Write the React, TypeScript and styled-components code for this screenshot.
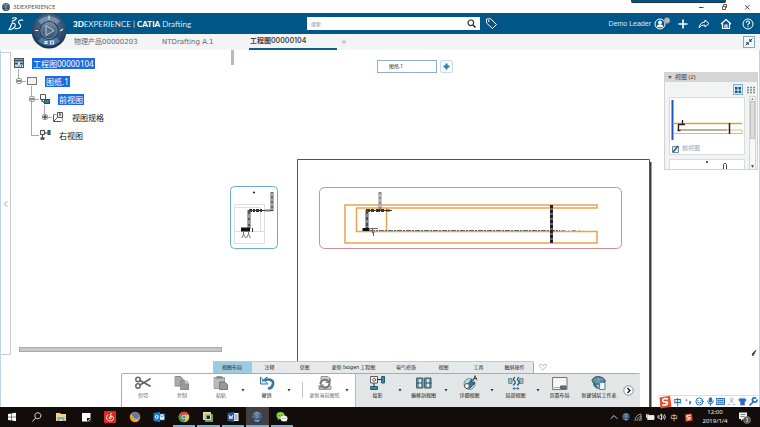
import React from "react";
import styled, { createGlobalStyle } from "styled-components";

const GlobalStyle = createGlobalStyle`
  * { box-sizing: border-box; }
  body { margin: 0; background: #fff; }
  body, button, input {
    font-family: "Noto Sans", "Noto Sans CJK SC", sans-serif;
    color: #333;
  }
  button { padding: 0; border: 0; background: none; cursor: pointer; }
  svg { display: block; flex: none; }
`;

const Window = styled.div`
  position: relative;
  display: grid;
  grid-template-rows: 13px 21px 16px 1fr 20px;
  min-height: 100vh;
  overflow: hidden;
`;

/* ---------- title bar ---------- */
const TitleBar = styled.header`
  display: flex;
  align-items: center;
  padding: 0 9px 0 2px;
  font-size: 6px;
  color: #555;
`;
const TitleText = styled.span`
  margin-left: 3px;
  flex: 1;
`;
const WindowControls = styled.div`
  display: flex;
  gap: 15px;
`;
const IconButton = styled.button`
  display: grid;
  place-items: center;
`;
const DockedStrip = styled.div`
  position: absolute;
  top: 0;
  right: 34px;
  width: 95px;
  height: 3px;
  background: #0c5277;
  border-bottom: 1px solid #083a57;
  border-radius: 0 0 2px 2px;
`;

/* ---------- application header ---------- */
const AppBar = styled.div`
  display: flex;
  align-items: center;
  padding: 0 6px 0 8px;
  background: #005686;
  color: #fff;
`;
const Brand = styled.div`
  width: 234px;
  margin-left: 49px;
  font: 8px/12px Lato, sans-serif;
  color: #d9ebf5;
  white-space: nowrap;
  b { font-weight: 900; color: #fff; }
`;
const Search = styled.label`
  display: flex;
  align-items: center;
  width: 173px;
  height: 13px;
  padding: 0 4px;
  background: #fff;
`;
const SearchInput = styled.input`
  flex: 1;
  min-width: 0;
  height: 11px;
  padding: 0;
  border: 0;
  outline: 0;
  font-size: 5px;
  &::placeholder { color: #888; }
`;
const TagButton = styled(IconButton)`
  margin-left: 5px;
`;
const UserArea = styled.div`
  display: flex;
  align-items: center;
  margin-left: auto;
  font: 7px/10px "Liberation Sans", sans-serif;
  color: #d9ebf5;
`;
const Profile = styled(IconButton)`
  margin: 0 7px 0 3px;
`;
const HeaderActions = styled.div`
  display: flex;
  align-items: center;
  gap: 10px;
`;
const Compass = styled.button`
  position: absolute;
  left: 31px;
  top: 13px;
`;

/* ---------- document tabs ---------- */
const DocTabs = styled.nav`
  display: flex;
  align-items: center;
  padding: 0 5px 0 73px;
  background: #f3f4f5;
`;
const DocTab = styled.button<{ $active?: boolean }>`
  width: 88px;
  height: 16px;
  padding: 0 0 ${(p) => (p.$active ? 0 : 1)}px 1px;
  border-bottom: ${(p) => (p.$active ? "2px solid #0d6187" : "0")};
  text-align: left;
  white-space: nowrap;
  font-family: ${(p) => (p.$active ? "Inter" : '"DejaVu Sans"')}, "Noto Sans CJK SC", sans-serif;
  font-size: 7px;
  line-height: 14px;
  font-weight: ${(p) => (p.$active ? 600 : 400)};
  color: ${(p) => (p.$active ? "#444" : "#666")};
`;
const NewTab = styled(IconButton)`
  margin-left: 4px;
`;
const Collapse = styled(IconButton)`
  width: 12px;
  height: 12px;
  margin-left: auto;
  border: 1px solid #7fa6c4;
  background: #f8fbfd;
`;

/* ---------- work area ---------- */
const Work = styled.main`
  position: relative;
  display: grid;
  grid-template-rows: 1fr auto;
  border-left: 1px solid #bcd7ec;
  border-right: 1px solid #bcd7ec;
`;
const Drawing = styled.svg`
  position: absolute;
  inset: 0;
  width: 100%;
  height: 100%;
`;
const Upper = styled.div`
  position: relative;
  display: flex;
`;
const Gutter = styled.aside`
  display: grid;
  place-items: center;
  width: 10px;
  margin: 2px 0 6px;
  border: 1px solid #c3ccd6;
  border-left: 0;
`;
const TreePanel = styled.section`
  display: flex;
  flex-direction: column;
  width: 223px;
  padding: 4px 0 9px 1px;
`;
const TreeTop = styled.div`
  display: flex;
  flex: 1;
  justify-content: space-between;
`;
const TreeList = styled.ul`
  margin: 0;
  padding: 0;
  list-style: none;
`;
const TreeRow = styled.li<{ $level: number }>`
  display: flex;
  align-items: center;
  height: 18px;
  padding-left: ${(p) => Math.max(0, p.$level - 1) * 13}px;
`;
const Slot = styled.div<{ $up: number }>`
  position: relative;
  display: grid;
  place-items: center;
  width: 13px;
  height: 18px;
  &::before {
    content: "";
    position: absolute;
    left: 6px;
    bottom: 8px;
    width: 7px;
    height: ${(p) => p.$up}px;
    border-left: 1px solid #aaa;
    border-bottom: 1px solid #aaa;
  }
`;
const Expander = styled.button`
  position: relative;
  width: 6px;
  height: 6px;
  border: 1px solid #999;
  border-radius: 2px;
  background: #fff;
  display: grid;
  place-items: center;
`;
const NodeIcon = styled.span`
  display: grid;
  place-items: center;
  width: 13px;
`;
const NodeLabel = styled.span<{ $selected?: boolean }>`
  margin-left: 7px;
  padding: 0 1px;
  font-size: 8px;
  line-height: 11px;
  white-space: nowrap;
  color: ${(p) => (p.$selected ? "#fff" : "#111")};
  background: ${(p) => (p.$selected ? "#1c69e0" : "transparent")};
`;
const VScroll = styled.div`
  width: 3px;
  height: 15px;
  margin-top: -4px;
  background: #b9b9b9;
`;
const HScroll = styled.div`
  height: 5px;
  margin: 0 12px 0 7px;
  border: 1px solid #aaa;
  background: #c8c8c8;
`;
const SheetTabs = styled.div`
  display: flex;
  flex: 1;
  align-items: flex-start;
  gap: 3px;
  padding: 10px 0 0 143px;
`;
const SheetTab = styled.button`
  width: 60px;
  height: 13px;
  padding-left: 11px;
  border: 1px solid #8fb0cc;
  background: #fff;
  text-align: left;
  font-size: 5px;
  line-height: 11px;
`;
const AddSheet = styled(IconButton)`
  width: 13px;
  height: 13px;
  border: 1px solid #cfdbe4;
  border-radius: 2px;
  background: #f7fafc;
`;

/* ---------- views panel ---------- */
const ViewsPanel = styled.section`
  align-self: flex-start;
  width: 94px;
  height: 98px;
  margin: 22px 1px 0 0;
  overflow: hidden;
  border: 1px solid #d3d3d3;
  background: #f2f3f3;
`;
const PanelHead = styled.h2`
  display: flex;
  align-items: center;
  gap: 3px;
  height: 9px;
  margin: 0;
  padding: 0 3px;
  background: #d3d5d6;
  font-size: 6px;
  line-height: 9px;
  font-weight: 400;
  color: #444;
`;
const Modes = styled.div`
  display: flex;
  justify-content: flex-end;
  gap: 3px;
  padding: 2px 1px 0;
`;
const Mode = styled(IconButton)<{ $on?: boolean }>`
  width: 10px;
  height: 11px;
  border: 1px solid ${(p) => (p.$on ? "#7db5d8" : "transparent")};
  background: ${(p) => (p.$on ? "#d5eaf6" : "transparent")};
`;
const PanelBody = styled.div`
  display: flex;
  gap: 4px;
  padding: 1px 1px 0 4px;
`;
const Cards = styled.div`
  display: grid;
  flex: 1;
  gap: 4px;
  padding-top: 1px;
`;
const Card = styled.article`
  height: 58px;
  border: 1px solid #d9dcdd;
  background: #fff;
`;
const CardName = styled.div`
  display: flex;
  align-items: center;
  gap: 3px;
  padding-left: 2px;
  font-size: 6px;
  line-height: 9px;
  color: #8fa9b8;
`;
const PanelScroll = styled.div`
  display: flex;
  flex-direction: column;
  align-items: center;
  width: 7px;
  height: 74px;
  border: 1px solid #d6d6d6;
  background: #f7f7f7;
`;
const Thumb = styled.div`
  width: 5px;
  height: 38px;
  margin-bottom: auto;
  border: 1px solid #c2c2c2;
  background: #dedede;
`;

/* ---------- action bar ---------- */
const ActionBar = styled.section`
  position: relative;
  justify-self: center;
  width: 519px;
`;
const Sections = styled.div`
  display: flex;
  align-items: center;
  height: 12px;
  padding-left: 92px;
`;
const SectionTab = styled.button<{ $w: number; $active?: boolean }>`
  width: ${(p) => p.$w}px;
  height: 12px;
  border-top: 1px solid #c4c8ca;
  background: ${(p) => (p.$active ? "#9ccbe0" : "#e6e9ea")};
  font-size: 5px;
  line-height: 11px;
  white-space: nowrap;
  color: #222;
  &:last-of-type { border-right: 1px solid #aaa; border-radius: 0 2px 0 0; }
`;
const Chevron = styled.span`
  margin-left: 4px;
`;
const Tools = styled.div`
  display: flex;
  height: 34px;
  border: 1px solid #a9adaf;
  border-bottom: 0;
  border-radius: 2px 2px 0 0;
  background: #fff;
`;
const ToolGroup = styled.div<{ $shade?: boolean }>`
  display: flex;
  padding: 1px 4px 0 2px;
  ${(p) => p.$shade && "flex: 1; background: #e3e6e6; border-left: 1px solid #b8bcbd;"}
`;
const Tool = styled.button<{ $w: number; $muted?: boolean }>`
  display: flex;
  flex-direction: column;
  align-items: center;
  width: ${(p) => p.$w}px;
  font-size: 5px;
  line-height: 9px;
  white-space: nowrap;
  color: ${(p) => (p.$muted ? "#666" : "#111")};
`;
const More = styled.button`
  display: grid;
  width: 6px;
  height: 26px;
  padding: 5px 2px 0 0;
  place-items: center;
`;
const Divider = styled.div`
  width: 1px;
  height: 16px;
  margin: 7px 2px 0 9px;
  background: #c4c4c4;
`;
const NextPage = styled(IconButton)`
  width: 15px;
  height: 30px;
`;

/* ---------- input method bar ---------- */
const ImeBar = styled.div`
  position: absolute;
  right: 0;
  bottom: 0;
  display: flex;
  align-items: center;
  width: 101px;
  height: 12px;
  border-top: 1px solid #cfe0ee;
  background: #fff;
`;
const ImeItems = styled.div`
  display: grid;
  flex: 1;
  grid-template-columns: repeat(8, 1fr);
  place-items: center;
  font-size: 8px;
  line-height: 10px;
  font-weight: 700;
  color: #2a6db8;
`;

/* ---------- task bar ---------- */
const TaskBar = styled.footer`
  display: flex;
  justify-content: space-between;
  background: #120d0b;
  color: #eee;
`;
const Apps = styled.div`
  display: grid;
  grid-template-columns: repeat(12, 1fr);
  width: 294px;
`;
const TaskButton = styled(IconButton)<{ $open?: boolean; $front?: boolean }>`
  margin: 0 1px;
  padding-top: ${(p) => (p.$open ? 2 : 0)}px;
  border-bottom: ${(p) => (p.$open ? "2px solid #83add0" : "0")};
  background: ${(p) => (p.$front ? "#443f3e" : "transparent")};
`;
const Tray = styled.div`
  display: flex;
  align-items: center;
  padding-right: 8px;
`;
const TrayIcons = styled.div`
  display: grid;
  grid-template-columns: repeat(6, 12px) 16px;
  place-items: center;
  font-size: 7px;
  line-height: 9px;
`;
const Clock = styled.time`
  width: 38px;
  font-size: 6px;
  line-height: 9px;
  text-align: center;
`;

/* ---------- icon drawings ---------- */
const Ball = ({ size }: { size: number }) => (
  <svg width={size} height={size} viewBox="0 0 36 36" aria-hidden>
    <defs>
      <radialGradient id="ballOuter" cx=".5" cy=".35" r=".65">
        <stop offset="0" stopColor="#5f7f9c" />
        <stop offset=".7" stopColor="#2d4e6e" />
        <stop offset="1" stopColor="#12304d" />
      </radialGradient>
      <linearGradient id="ballInner" x1="0" y1="0" x2="0" y2="1">
        <stop offset="0" stopColor="#7289a0" />
        <stop offset="1" stopColor="#33516f" />
      </linearGradient>
    </defs>
    <circle cx="18" cy="18" r="17.500" fill="url(#ballOuter)" />
    <path d="M7 8a15 15 0 0 1 22 0l-5 5a8.500 8.500 0 0 0-12 0z" fill="#93adc1" opacity=".6" />
    <path d="M7 28a15 15 0 0 0 22 0l-5-5a8.500 8.500 0 0 1-12 0z" fill="#6f9fc8" opacity=".55" />
    <circle cx="18" cy="17.500" r="9.500" fill="#16304a" />
    <circle cx="18" cy="17.500" r="8.200" fill="url(#ballInner)" stroke="#8ca4b8" strokeWidth=".7" />
    <path d="M15 12.500v10l8-5z" fill="#566f88" stroke="#c6d4df" strokeWidth=".9" />
    <path d="M18 2.500v4M4 17.500h3.500M29 18l3-2M14 28.500h2v2h-2zM19.500 28h3v3h-3z" stroke="#dce8f0" strokeWidth="1.200" fill="none" />
  </svg>
);

const DsLogo = () => (
  <svg width="16" height="16" viewBox="0 0 16 16" fill="none" stroke="#fff" strokeWidth="1.100" strokeLinecap="round" strokeLinejoin="round" aria-hidden>
    <path d="M4.500 2.300c2-.9 4.300-.7 3.800.4C7.900 3.800 6 4.500 4.200 5.200" />
    <path d="M4.200 7C3.300 9.500 2.300 11.500 1 13.800c3.200-.5 6-2.300 6.300-4.700.2-1.700-1.400-2.200-3.300-1.900" />
    <path d="M14.800 4.200c-1.700-.9-4.500.1-4.300 1.900.2 1.500 2.300 2.200 2.200 4-.1 2.100-3 3-5.400 2.500" />
  </svg>
);

const line = { fill: "none", strokeLinecap: "round", strokeLinejoin: "round" } as const;

const Pipes = () => (
  <>
    <g stroke="#333" fill="none">
      <path d="M272 192v19" strokeWidth="3" stroke="#666" />
      <path d="M272 193v17" stroke="#ddd" strokeDasharray="3 2" />
      <path d="M248 210.500h25" />
      <path d="M249 210.500h13" strokeWidth="3" strokeDasharray="3 1 2 1" />
      <path d="M265 210.500h6" strokeWidth="2" stroke="#777" />
      <path d="M249 210v19" strokeWidth="3" stroke="#555" />
      <path d="M249 214v14" stroke="#ddd" strokeDasharray="4 2" />
      <path d="M241 229.500h9" strokeWidth="4" stroke="#111" />
      <path d="M252.500 228v4" />
      <path d="M243.500 232v3l-2 3M243.500 234l2 4M248.500 232v2l-2 4M248.500 234l2 4" stroke="#777" />
    </g>
    <circle cx="254" cy="192.500" r="1" fill="#111" />
  </>
);

const CanvasDrawing = () => (
  <Drawing aria-label="Drawing sheet">
    <g transform="translate(-1 -50)" fill="none">
      <path d="M650.500 162v300" stroke="#3c3c3c" strokeWidth="2" />
      <path d="M297.500 460V159.500h352V460" stroke="#555" fill="#fff" />
      <rect x="230.500" y="186.500" width="47" height="62" rx="4" stroke="#69aecb" fill="#fff" />
      <path d="M234.500 204.500h30v39h-30zM234.500 207.500h26v24h-26M234.500 231.500h30" stroke="#dedede" />
      <Pipes />
      <rect x="319.500" y="187.500" width="302" height="61" rx="5" stroke="#d58b90" />
      <path
        d="M597 205H345v38h252v-11.500H356.500V208H597zM386.500 208v23"
        stroke="#eda24a"
        strokeWidth="1.500"
      />
      <g stroke="#333">
        <path d="M380 192v18" strokeWidth="3" stroke="#8a8a8a" />
        <path d="M380 194v14" stroke="#e4e4e4" strokeDasharray="3 2" />
        <path d="M366 210.500h26" />
        <path d="M366 210.500h19" strokeWidth="3" strokeDasharray="4 1 3 2" />
        <path d="M386 210.500h4" strokeWidth="2" />
        <path d="M367 210v19" strokeWidth="3" stroke="#4a4a4a" />
        <path d="M367 214v13" stroke="#ccc" strokeDasharray="3 3" />
        <path d="M362.500 229.500h7" strokeWidth="3" stroke="#111" />
        <path d="M370 228.500h8M372.500 229v4l2-1M373.500 232v4" stroke="#666" />
        <path d="M370 230.500h190" stroke="#666" strokeDasharray="5 1 2 1" />
        <path d="M561 230.500h19" stroke="#999" strokeDasharray="4 3 1 3" />
        <path d="M551.500 205v38" strokeWidth="3" stroke="#666" />
        <path d="M551.500 205v38" strokeWidth="3" strokeDasharray="3 2" stroke="#222" />
      </g>
      <path d="M756 350l-4 4 1 2z" fill="#333" stroke="#555" />
    </g>
  </Drawing>
);

const NodeGlyph = ({ kind }: { kind: string }) => (
  <svg width="12" height="12" viewBox="0 0 12 12" fill="none" stroke="#555" aria-hidden>
    {kind === "drawing" && (
      <>
        <rect x="1.500" y="1.500" width="9" height="9" fill="#dfe9ec" />
        <path d="M2 3.500h8M2 6.500h3m2 0h3" stroke="#285766" strokeWidth="2" />
        <path d="M3 9v2M6 8v3M8.500 8v3" stroke="#3d7890" />
      </>
    )}
    {kind === "sheet" && <rect x="1.500" y="2.500" width="9" height="7" fill="#f4f0f4" stroke="#777" />}
    {kind === "front" && (
      <>
        <path d="M1.500 1.500h5v5h-5z" fill="#fff" />
        <path d="M3 8l2 1.500M3 6v3" stroke="#333" />
        <rect x="5.500" y="6.500" width="5" height="4" fill="#357c90" stroke="#1f5363" />
      </>
    )}
    {kind === "spec" && (
      <>
        <path d="M1.500 3.500v7h8" />
        <path d="M1.500 10.500l4-4" />
        <path d="M5.500 1.500h5v5h-5z" fill="#eee" />
        <path d="M8 2v3" stroke="#222" />
        <path d="M1.500 3.500h3M10.500 7v3.500" stroke="#999" />
      </>
    )}
    {kind === "right" && (
      <>
        <rect x="1.500" y="1.500" width="4" height="4" fill="#eee" />
        <path d="M5.500 4h3M3.500 6v2" stroke="#333" />
        <rect x="9" y="1.500" width="2" height="4" fill="#357c90" stroke="#1f5363" />
        <path d="M1.500 9.500h4" stroke="#1f5363" strokeWidth="2.500" />
      </>
    )}
  </svg>
);

const ToolGlyph = ({ kind }: { kind: string }) => (
  <svg width="18" height="16" viewBox="0 0 18 16" {...line} stroke="#555" aria-hidden>
    {kind === "cut" && (
      <g stroke="#666">
        <circle cx="4" cy="4.500" r="2.200" strokeWidth="1.500" />
        <circle cx="4" cy="11" r="2.200" strokeWidth="1.500" />
        <path d="M6 5.500l10 5.500M6 10L16 4" strokeWidth="1.800" />
      </g>
    )}
    {kind === "copy" && (
      <g stroke="#888">
        <path d="M2.500 1.500h5l2.500 2.500v7H2.500z" fill="#aaa" />
        <path d="M8 5.500h4.500L15.500 8v6.500H8z" fill="#999" />
        <path d="M12.500 5.500V8h3" stroke="#ddd" />
      </g>
    )}
    {kind === "paste" && (
      <g stroke="#999">
        <rect x="2.500" y="2.500" width="10" height="11" fill="#bbb" />
        <path d="M5 1.500h5v2H5z" fill="#888" />
        <path d="M8 7h4.500L15.500 9.500v5H8z" fill="#999" stroke="#777" />
      </g>
    )}
    {kind === "undo" && (
      <>
        <path d="M7.500 5c5-1.500 8 .5 7.500 4-.3 2.500-1.800 4-4 4.500" stroke="#37799c" strokeWidth="2.600" />
        <path d="M2.500 2.500v6.500H9.500z" fill="#d9edf7" stroke="#37799c" />
        <path d="M4.500 6L9 2.500" stroke="#37799c" strokeWidth="1.400" />
      </>
    )}
    {kind === "update" && (
      <>
        <path d="M5 6V1.500h7L14.500 4v3M3 11v3.500h12V11" stroke="#999" fill="#ccc" />
        <path d="M4.500 8.500a4.500 4.500 0 0 1 8-2M13.500 8.500a4.500 4.500 0 0 1-8 2.500" stroke="#777" strokeWidth="2" />
        <path d="M13.500 4v3.500H10M4 13.500V10h3.500" stroke="#777" />
      </>
    )}
    {kind === "project" && (
      <>
        <rect x="2" y="1.500" width="6.500" height="6.500" fill="#fff" />
        <circle cx="5.200" cy="4.700" r="1.500" />
        <path d="M9 4.500h4M5 8.500V11" stroke="#222" />
        <rect x="13" y="1.500" width="2.500" height="6.500" fill="#3f879e" stroke="#24586a" />
        <rect x="2" y="11.500" width="6.500" height="3" fill="#3f879e" stroke="#24586a" />
      </>
    )}
    {kind === "section" && (
      <>
        <rect x="2" y="3" width="6" height="10" fill="#7897a3" stroke="#365966" />
        <rect x="10" y="3" width="6" height="10" fill="#7897a3" stroke="#365966" />
        <path d="M5 5v6M13 5v6" stroke="#e4eef1" strokeWidth="2" />
        <path d="M2.500 8h4M11 8h5" stroke="#27495a" />
      </>
    )}
    {kind === "detail" && (
      <>
        <circle cx="8.500" cy="9" r="5.500" fill="#b8d6df" stroke="#6c8f9a" />
        <path d="M5 12l6-8v3l3 1-5 5z" fill="#397a92" stroke="#24586a" />
        <circle cx="6" cy="11" r="2.500" fill="#f1f5f6" />
        <path d="M14 1l2 4M14 1l-1.500 4M13 3.500h2.500" stroke="#222" strokeWidth=".8" />
      </>
    )}
    {kind === "broken" && (
      <>
        <path d="M2 3.500h3v5H2zM13 3.500h3v5h-3z" fill="#9fb7bf" stroke="#6c8f9a" />
        <path d="M7.500 2.500q-2 2 0 3.500t-1 4M11.500 2.500q-2 2 0 3.500t-1 4" stroke="#27657b" strokeWidth="1.400" />
        <path d="M6 13.500h6M7.500 12.500L6 13.500l1.500 1M10.500 12.500l1.500 1-1.500 1" stroke="#38758b" strokeWidth=".8" />
      </>
    )}
    {kind === "layout" && (
      <>
        <rect x="2" y="2.500" width="14" height="12" fill="#f6f6f6" stroke="#777" />
        <path d="M3.500 12.500h6" stroke="#aaa" />
        <path d="M10 11h5v2.500h-5z" fill="#3f879e" stroke="#555" />
      </>
    )}
    {kind === "ply" && (
      <>
        <path d="M2 5q2-4 7-3.500T15.500 6L13 10H5z" fill="#517e90" stroke="#2d5b6c" />
        <path d="M4 5l9-1M4 7h9M8 2l2 8" stroke="#9dc0cc" strokeWidth=".7" />
        <path d="M6 9.500h3v4H7zM10 7.500h5v7h-5z" fill="#f4f6f7" stroke="#517e90" />
        <path d="M4 8q0 3 3 4" stroke="#35697c" strokeWidth="2" />
      </>
    )}
  </svg>
);

const AppGlyph = ({ kind }: { kind: string }) => (
  <svg width="12" height="12" viewBox="0 0 12 12" fill="none" aria-hidden>
    {kind === "start" && <path d="M2 3l3.500-.6v3.300H2zM6 2.300L10 1.700v4H6zM2 6.200h3.500v3.300L2 9zM6 6.200h4v4.100L6 9.600z" fill="#fff" />}
    {kind === "search" && <path d="M6.800 1.700a3 3 0 1 0 .1 0zM4.700 7L1.500 10.500" stroke="#eee" strokeWidth=".9" />}
    {kind === "files" && (
      <>
        <path d="M1 2h4l1 1h5v7H1z" fill="#f3d580" />
        <path d="M2.500 6h7v4h-2V8h-3v2h-2z" fill="#67b0d9" />
      </>
    )}
    {kind === "notes" && (
      <>
        <path d="M2 2h8.500v8.500H2z" fill="#fff" />
        <path d="M7 7h3.500L7 10.500z" fill="#111" />
        <path d="M10.500 8v2.500H8z" fill="#120d0b" />
      </>
    )}
    {kind === "music" && (
      <>
        <rect width="12" height="12" rx="1" fill="#e0281f" />
        <path d="M8 2.500C6.500 2 6.500 3 6.800 4.500l.4 2c0 2-2.200 1.700-2 .2.300-2 4-2.200 4.300.5C9.600 11 2.500 11 2.500 6.700c0-1.700 1-2.700 2-3.200" stroke="#fff" strokeWidth=".9" />
      </>
    )}
    {kind === "firefox" && (
      <>
        <circle cx="6" cy="6" r="5.300" fill="#e7752b" />
        <circle cx="6.300" cy="5" r="3.500" fill="#3a86c8" />
        <path d="M1 4q2-1 3 1.500t4 2.500q2 0 2.500-2-.5 5-4.500 5T1 4" fill="#f3a437" />
      </>
    )}
    {kind === "outlook" && (
      <>
        <path d="M6 3h5.500v6H6z" fill="#eaf4fc" stroke="#2376be" strokeWidth=".7" />
        <path d="M6 3.500l3 2.500 2.500-2.500" stroke="#2376be" strokeWidth=".8" />
        <path d="M.5 2L7 1v10L.5 10z" fill="#1d78c8" />
        <circle cx="3.700" cy="6" r="1.500" stroke="#fff" />
      </>
    )}
    {kind === "chrome" && (
      <>
        <circle cx="6" cy="6" r="5.300" fill="#e2c33c" />
        <path d="M1.400 3.400A5.300 5.300 0 0 1 10.800 3.800H6L4 7z" fill="#d84a3b" />
        <path d="M1.400 3.400A5.300 5.300 0 0 0 6 11.300L8 7.500H4z" fill="#3f9c55" />
        <circle cx="6" cy="6" r="2.300" fill="#fff" />
        <circle cx="6" cy="6" r="1.800" fill="#4a86dc" />
      </>
    )}
    {kind === "vm" && (
      <>
        <rect x="1" y="1" width="8" height="8" fill="#e4d79c" />
        <rect x="3" y="3" width="8" height="8" fill="#6b9e65" />
        <rect x="4" y="4" width="4.500" height="4.500" fill="#182d2b" stroke="#dce6c4" />
      </>
    )}
    {kind === "word" && (
      <>
        <path d="M6 2h5.500v8H6z" fill="#f3f7fc" />
        <path d="M7.500 4h3M7.500 6h3M7.500 8h3" stroke="#2a5699" strokeWidth=".8" />
        <path d="M.5 2L7 1v10L.5 10z" fill="#2a5699" />
        <path d="M2 4l.8 4L3.900 5l1 3 .8-4" stroke="#fff" strokeWidth=".8" />
      </>
    )}
    {kind === "wechat" && (
      <>
        <ellipse cx="4.500" cy="4.500" rx="4" ry="3.400" fill="#87cf4d" />
        <ellipse cx="8" cy="7.500" rx="3.500" ry="3" fill="#f0f3f0" />
        <path d="M2 7l-.3 2L4 7.500M9.500 9.500l1.500 1.300-.3-2" fill="#c8ddc5" />
        <path d="M3 4v.8M5.800 4v.8M7 7v.7M9.200 7v.7" stroke="#333" strokeWidth=".8" />
      </>
    )}
  </svg>
);

const SogouLogo = ({ size }: { size: number }) => (
  <svg width={size} height={size} viewBox="0 0 14 14" aria-hidden>
    <path d="M1.500 2.500L12 .7l1.500 11L2.500 13.500z" fill="#e4502c" />
    <path d="M10 3.800Q5 3 4.700 5.200t4.600 2q1 3-5 3" fill="none" stroke="#fff" strokeWidth="1.700" />
  </svg>
);

const ImeGlyph = ({ kind }: { kind: string }) => (
  <svg width="9" height="9" viewBox="0 0 9 9" {...line} stroke="#2a6db8" aria-hidden>
    {kind === "punct" && <path d="M2.500 3v.2M6 4.500q1 1-.3 2.300" strokeWidth="1.500" />}
    {kind === "smile" && (
      <>
        <circle cx="4.500" cy="4.500" r="3.600" />
        <path d="M3 3.500v.1M6 3.500v.1M2.500 5q2 2.500 4 0" />
      </>
    )}
    {kind === "mic" && (
      <>
        <rect x="3.200" y=".7" width="2.600" height="4.500" rx="1.300" fill="#2a6db8" />
        <path d="M1.700 4q.3 3 2.800 3T7.300 4M4.500 7v1.500" />
      </>
    )}
    {kind === "keys" && (
      <>
        <rect x=".5" y="1.500" width="8" height="6" fill="#a8cbea" />
        <path d="M2 3.500h5M2 5.500h5" strokeDasharray="1 1" />
      </>
    )}
    {kind === "person" && (
      <g stroke="#a9b7c6">
        <circle cx="4.500" cy="2.500" r="1.300" />
        <path d="M4.500 4L2.500 6M4.500 4l2 2M1 7.500h2M6 7.500h2" />
      </g>
    )}
    {kind === "shirt" && <path d="M3 1.200q1.500 1 3 0l2.300 1.500-1 1.800-.8-.4v4H2.500V4l-.8.5-1-1.800z" fill="#2a6db8" strokeWidth=".5" />}
    {kind === "wrench" && <path d="M1 8l3.500-3.500M8 3a2 2 0 0 1-3.500 1.500A2 2 0 0 1 6.500 1" strokeWidth="1.700" />}
  </svg>
);

const TrayGlyph = ({ kind }: { kind: string }) => (
  <svg width="10" height="10" viewBox="0 0 10 10" {...line} stroke="#e8e8e8" strokeWidth=".9" aria-hidden>
    {kind === "up" && <path d="M2 6.500l3-3 3 3" />}
    {kind === "wifi" && <path d="M2 8.500a6.500 6.500 0 0 1 6-6.500v6.500M4 8.500a4 4 0 0 1 4-4M6 8.500a2 2 0 0 1 2-2" stroke="#aaa" />}
    {kind === "battery" && (
      <>
        <rect x="3" y="3.500" width="6" height="4" fill="#eee" />
        <path d="M1.500 2.500v3M3 2v2" />
      </>
    )}
    {kind === "sound" && <path d="M1 4v2h1.500l2 2V2l-2 2zM6 3.500q1 1.500 0 3M7.500 2.500q2 2.500 0 5" />}
  </svg>
);

/* ---------- data ---------- */
type Node = { label: string; level: number; glyph: string; up?: number; sign?: string; selected?: boolean };
const nodes: Node[] = [
  { label: "工程图00000104", level: 0, glyph: "drawing", selected: true },
  { label: "图纸.1", level: 1, glyph: "sheet", up: 12, sign: "-", selected: true },
  { label: "前视图", level: 2, glyph: "front", up: 13, sign: "-", selected: true },
  { label: "视图规格", level: 3, glyph: "spec", up: 12, sign: "+" },
  { label: "右视图", level: 2, glyph: "right", up: 36 },
];

const sections = [
  { label: "视图布局", w: 39, active: true },
  { label: "注释", w: 36 },
  { label: "草图", w: 34 },
  { label: "更新 Isogen 工程图", w: 64 },
  { label: "电气修饰", w: 41 },
  { label: "视图", w: 34 },
  { label: "工具", w: 36 },
  { label: "触屏操作", w: 37 },
];

type ToolDef = { label: string; glyph: string; w: number; more?: boolean; muted?: boolean };
const editTools: ToolDef[] = [
  { label: "剪切", glyph: "cut", w: 39, muted: true },
  { label: "复制", glyph: "copy", w: 39, muted: true },
  { label: "粘贴", glyph: "paste", w: 39, more: true, muted: true },
  { label: "撤销", glyph: "undo", w: 40, more: true },
];
const updateTools: ToolDef[] = [{ label: "更新当前图纸", glyph: "update", w: 40, more: true, muted: true }];
const viewTools: ToolDef[] = [
  { label: "投影", glyph: "project", w: 40, more: true },
  { label: "偏移剖视图", glyph: "section", w: 40, more: true },
  { label: "详细视图", glyph: "detail", w: 40, more: true },
  { label: "局部视图", glyph: "broken", w: 40, more: true },
  { label: "页面布局", glyph: "layout", w: 36 },
  { label: "新建铺层工作表", glyph: "ply", w: 43 },
];

const apps = [
  { name: "start" },
  { name: "search" },
  { name: "files" },
  { name: "notes" },
  { name: "music" },
  { name: "firefox" },
  { name: "outlook" },
  { name: "chrome", open: true },
  { name: "vm", open: true },
  { name: "word", open: true },
  { name: "compass", open: true, front: true },
  { name: "wechat", open: true },
];

const ToolList = ({ items }: { items: ToolDef[] }) => (
  <>
    {items.map((t) => (
      <React.Fragment key={t.label}>
        <Tool $w={t.w} $muted={t.muted}>
          <ToolGlyph kind={t.glyph} />
          {t.label}
        </Tool>
        {t.more && (
          <More aria-label={`${t.label} 选项`}>
            <svg width="4" height="3" viewBox="0 0 4 3" aria-hidden>
              <path d="M.5 0h3L2 2.500z" fill="#333" />
            </svg>
          </More>
        )}
      </React.Fragment>
    ))}
  </>
);

export default function App() {
  return (
    <>
      <GlobalStyle />
      <Window>
        <TitleBar>
          <Ball size={8} />
          <TitleText>3DEXPERIENCE</TitleText>
          <WindowControls>
            <IconButton aria-label="Minimize">
              <svg width="8" height="8" viewBox="0 0 8 8"><path d="M2 4.500h4.500" stroke="#444" /></svg>
            </IconButton>
            <IconButton aria-label="Restore">
              <svg width="8" height="8" viewBox="0 0 8 8" fill="none" stroke="#654"><path d="M2.500 3.500h3v3h-3zM3.500 3V1.500h3v3H6" /></svg>
            </IconButton>
            <IconButton aria-label="Close">
              <svg width="8" height="8" viewBox="0 0 8 8"><path d="M2 2l4.500 4.500M6.500 2L2 6.500" stroke="#444" strokeWidth=".9" /></svg>
            </IconButton>
          </WindowControls>
        </TitleBar>
        <DockedStrip />

        <AppBar>
          <DsLogo />
          <Brand><b>3D</b>EXPERIENCE | <b>CATIA</b> Drafting</Brand>
          <Search>
            <SearchInput placeholder="搜索" aria-label="搜索" />
            <svg width="9" height="9" viewBox="0 0 9 9" fill="none" stroke="#333" aria-hidden>
              <circle cx="3.800" cy="3.800" r="2.800" strokeWidth="1.200" />
              <path d="M6 6l2.500 2.500" strokeWidth="1.600" />
            </svg>
          </Search>
          <TagButton aria-label="Tags">
            <svg width="13" height="13" viewBox="0 0 13 13" fill="none" stroke="#fff" strokeLinejoin="round">
              <path d="M1.500 2v4l6 5.500 4-4L5.500 1.700z" />
              <circle cx="3.800" cy="4" r=".5" />
            </svg>
          </TagButton>
          <UserArea>
            Demo Leader
            <Profile aria-label="Profile">
              <svg width="17" height="14" viewBox="0 0 17 14" fill="none" stroke="#fff">
                <circle cx="6" cy="7" r="5" />
                <circle cx="6" cy="5.500" r="1.700" fill="#fff" strokeWidth=".5" />
                <path d="M3 10q0-2.500 3-2.500T9 10z" fill="#fff" strokeWidth=".5" />
                <circle cx="13" cy="3.500" r="2.800" fill="#b4b9bd" stroke="#8b98a2" strokeWidth=".8" />
              </svg>
            </Profile>
            <HeaderActions>
              <IconButton aria-label="Add">
                <svg width="10" height="10" viewBox="0 0 10 10"><path d="M5 .5v9M.5 5h9" stroke="#fff" strokeWidth="1.600" /></svg>
              </IconButton>
              <IconButton aria-label="Share">
                <svg width="12" height="12" viewBox="0 0 12 12" fill="none" stroke="#fff" strokeLinejoin="round">
                  <path d="M7 2l4 3.500L7 9V7Q3 6.500 1 10q.5-5.500 6-6z" />
                </svg>
              </IconButton>
              <IconButton aria-label="Home">
                <svg width="12" height="12" viewBox="0 0 12 12" fill="none" stroke="#fff" strokeLinejoin="round">
                  <path d="M1 6l5-4.500L11 6M2.500 5.500v5h7v-5M5 10V7h2v3" strokeWidth="1.200" />
                </svg>
              </IconButton>
              <IconButton aria-label="Help">
                <svg width="12" height="12" viewBox="0 0 12 12" fill="none" stroke="#fff">
                  <circle cx="6" cy="6" r="5" />
                  <path d="M4.300 4.800Q4.500 3 6 3t1.700 1.500Q7.700 5.500 6 6.300v.9M6 8.300v1" strokeWidth="1.200" />
                </svg>
              </IconButton>
            </HeaderActions>
          </UserArea>
        </AppBar>
        <Compass aria-label="Compass"><Ball size={36} /></Compass>

        <DocTabs>
          <DocTab>物理产品00000203</DocTab>
          <DocTab>NTDrafting A.1</DocTab>
          <DocTab $active>工程图00000104</DocTab>
          <NewTab aria-label="New tab">
            <svg width="6" height="6" viewBox="0 0 6 6"><path d="M3 .5v5M.5 3h5" stroke="#b0b4b7" /></svg>
          </NewTab>
          <Collapse aria-label="Collapse">
            <svg width="8" height="8" viewBox="0 0 8 8" fill="#1d4257" stroke="#1d4257">
              <path d="M7.500.5L5.500 2.500M.5 7.500l2-2" />
              <path d="M4.500 1v2.500H7zM1 4.500h2.500V7z" strokeWidth=".5" />
            </svg>
          </Collapse>
        </DocTabs>

        <Work>
          <CanvasDrawing />
          <Upper>
            <Gutter>
              <svg width="6" height="8" viewBox="0 0 6 8" fill="none" stroke="#9aa7b2" aria-hidden><path d="M4.500 1L1.500 4l3 3" /></svg>
            </Gutter>
            <TreePanel>
              <TreeTop>
                <TreeList>
                  {nodes.map((n) => (
                    <TreeRow key={n.label} $level={n.level}>
                      {n.up && (
                        <Slot $up={n.up}>
                          {n.sign && (
                            <Expander aria-label={n.label}>
                              <svg width="4" height="4" viewBox="0 0 4 4" stroke="#111" aria-hidden>
                                <path d={n.sign === "+" ? "M0 2h4M2 0v4" : "M0 2h4"} />
                              </svg>
                            </Expander>
                          )}
                        </Slot>
                      )}
                      <NodeIcon><NodeGlyph kind={n.glyph} /></NodeIcon>
                      <NodeLabel $selected={n.selected}>{n.label}</NodeLabel>
                    </TreeRow>
                  ))}
                </TreeList>
                <VScroll />
              </TreeTop>
              <HScroll />
            </TreePanel>
            <SheetTabs>
              <SheetTab>图纸.1</SheetTab>
              <AddSheet aria-label="Add sheet">
                <svg width="7" height="7" viewBox="0 0 7 7"><path d="M3.500.5v6M.5 3.500h6" stroke="#2f76a3" strokeWidth="2" /></svg>
              </AddSheet>
            </SheetTabs>
            <ViewsPanel>
              <PanelHead>
                <svg width="4" height="3" viewBox="0 0 4 3" aria-hidden><path d="M0 0h4L2 3z" fill="#666" /></svg>
                视图 (2)
              </PanelHead>
              <Modes>
                <Mode $on aria-label="Thumbnails">
                  <svg width="8" height="8" viewBox="0 0 8 8" fill="#22526c"><path d="M1 1h2.500v2.500H1zM4.500 1H7v2.500H4.500zM1 4.500h2.500V7H1zM4.500 4.500H7V7H4.500z" /></svg>
                </Mode>
                <Mode aria-label="List">
                  <svg width="8" height="8" viewBox="0 0 8 8"><path d="M0 1.500h8M0 4h8M0 6.500h8" stroke="#888" strokeWidth="1.600" strokeDasharray="2 1" /></svg>
                </Mode>
              </Modes>
              <PanelBody>
                <Cards>
                  <Card>
                    <svg width="74" height="46" viewBox="0 0 74 46" fill="none" aria-hidden>
                      <path d="M2.500 2v40" stroke="#1c55c4" strokeWidth="2" />
                      <path d="M4 25.500h68" stroke="#e49a3f" strokeWidth="1.500" />
                      <path d="M4 35.500h68v-3.500H8v-6" stroke="#eeb26c" />
                      <path d="M10 32h47" stroke="#888" />
                      <path d="M59.500 25v11" stroke="#222" strokeWidth="1.500" />
                      <path d="M12.500 22v4M8 26.500h7M8.500 27v6M7.500 32.500h3" stroke="#222" strokeWidth="1.300" />
                    </svg>
                    <CardName>
                      <svg width="7" height="8" viewBox="0 0 7 8" fill="none" aria-hidden>
                        <path d="M.5 1.500h6v6h-6z" fill="#e7f0f4" stroke="#6a8798" />
                        <path d="M1 7l5-6" stroke="#2d5b75" strokeWidth="1.500" />
                      </svg>
                      前视图
                    </CardName>
                  </Card>
                  <Card>
                    <svg width="74" height="10" viewBox="0 0 74 10" fill="none" aria-hidden>
                      <circle cx="37" cy="2" r="1" fill="#222" />
                      <path d="M53.500 9V4.500q1.500-3 3 0V9" stroke="#444" />
                    </svg>
                  </Card>
                </Cards>
                <PanelScroll>
                  <svg width="5" height="4" viewBox="0 0 5 4" aria-hidden><path d="M1 3h3L2.500 1z" fill="#888" /></svg>
                  <Thumb />
                  <svg width="5" height="5" viewBox="0 0 5 5" aria-hidden><path d="M1 1h3L2.500 4z" fill="#555" /></svg>
                </PanelScroll>
              </PanelBody>
            </ViewsPanel>
          </Upper>

          <ActionBar>
            <Sections>
              {sections.map((s) => (
                <SectionTab key={s.label} $w={s.w} $active={s.active}>{s.label}</SectionTab>
              ))}
              <Chevron>
                <svg width="10" height="8" viewBox="0 0 10 8" fill="#fff" stroke="#a8aeb2" strokeLinejoin="round" aria-hidden>
                  <path d="M1 2.500L3 1l2 2 2-2 2 1.500L5 7z" strokeWidth=".8" />
                </svg>
              </Chevron>
            </Sections>
            <Tools>
              <ToolGroup>
                <ToolList items={editTools} />
                <Divider />
                <ToolList items={updateTools} />
              </ToolGroup>
              <ToolGroup $shade>
                <ToolList items={viewTools} />
                <NextPage aria-label="Next tools">
                  <svg width="11" height="11" viewBox="0 0 11 11" fill="#fff" aria-hidden>
                    <circle cx="5.500" cy="5.500" r="4.700" stroke="#777" strokeWidth=".8" />
                    <path d="M4.500 3l2.500 2.500L4.500 8" fill="none" stroke="#111" strokeWidth="1.300" />
                  </svg>
                </NextPage>
              </ToolGroup>
            </Tools>
          </ActionBar>

          <ImeBar>
            <SogouLogo size={14} />
            <ImeItems>
              <span>中</span>
              {["punct", "smile", "mic", "keys", "person", "shirt", "wrench"].map((k) => (
                <ImeGlyph key={k} kind={k} />
              ))}
            </ImeItems>
          </ImeBar>
        </Work>

        <TaskBar>
          <Apps>
            {apps.map((a) => (
              <TaskButton key={a.name} $open={a.open} $front={a.front} aria-label={a.name}>
                {a.name === "compass" ? <Ball size={12} /> : <AppGlyph kind={a.name} />}
              </TaskButton>
            ))}
          </Apps>
          <Tray>
            <TrayIcons>
              <TrayGlyph kind="up" />
              <Ball size={8} />
              <TrayGlyph kind="wifi" />
              <TrayGlyph kind="battery" />
              <TrayGlyph kind="sound" />
              <span>中</span>
              <SogouLogo size={9} />
            </TrayIcons>
            <Clock>12:00<br />2019/1/4</Clock>
            <svg width="18" height="14" viewBox="0 0 18 14" aria-hidden>
              <path d="M5 2.500h8v6.500H9L7 11V9H5z" fill="#f2f2f2" />
              <path d="M6.500 4.500h5M6.500 6.500h4" stroke="#555" strokeWidth=".7" />
              <circle cx="13" cy="10" r="3.500" fill="#55504f" stroke="#999" strokeWidth=".6" />
              <path d="M12 8.300h1.800L13 9.700q1.300.2.800 1.300-.7.900-2 .3" fill="none" stroke="#fff" strokeWidth=".7" />
            </svg>
          </Tray>
        </TaskBar>
      </Window>
    </>
  );
}
